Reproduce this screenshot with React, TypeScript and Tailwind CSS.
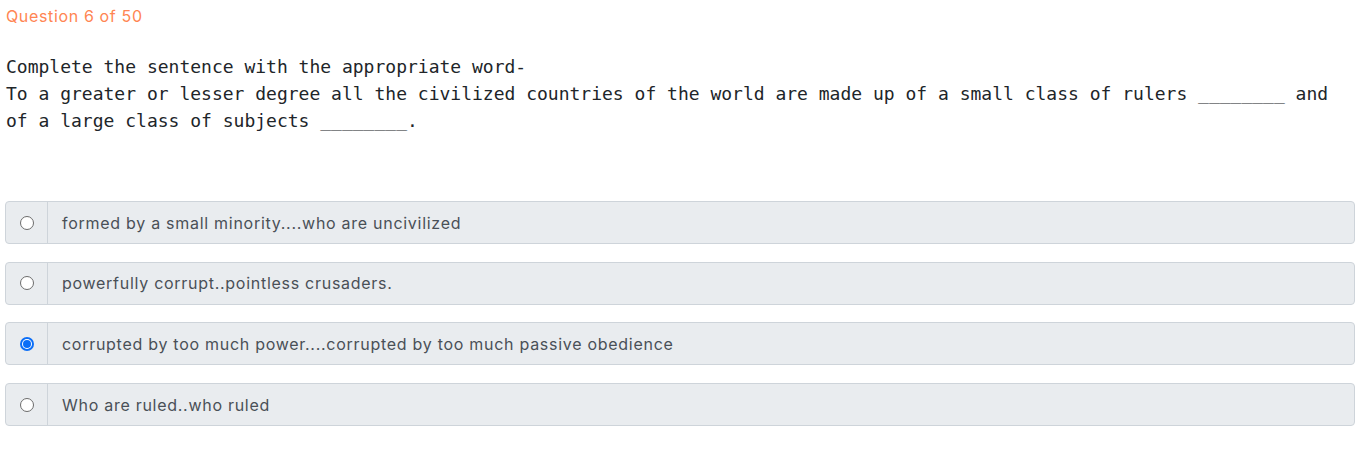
import React from 'react';

const options = [
  { text: 'formed by a small minority....who are uncivilized', checked: false },
  { text: 'powerfully corrupt..pointless crusaders.', checked: false },
  { text: 'corrupted by too much power....corrupted by too much passive obedience', checked: true },
  { text: 'Who are ruled..who ruled', checked: false },
];

const Radio = ({ checked }: { checked: boolean }) =>
  checked ? (
    <span className="flex h-[14px] w-[14px] items-center justify-center rounded-full bg-[#0b6ef7]">
      <span className="flex h-[10px] w-[10px] items-center justify-center rounded-full bg-white">
        <span className="h-[8px] w-[8px] rounded-full bg-[#0b6ef7]" />
      </span>
    </span>
  ) : (
    <span className="h-[14px] w-[14px] rounded-full border border-[#6c6c6c] bg-white" />
  );

const App = () => {
  return (
    <div className="bg-white min-h-screen px-[5px] pt-[4px] font-['Inter',sans-serif]">
      <div className="pl-[1px] text-base leading-6 tracking-[0.04em] text-[#ff8552]">Question 6 of 50</div>

      <div className="mt-[25px] pl-[1px] pr-[20px] font-['DejaVu_Sans_Mono','Liberation_Mono',monospace] text-[18px] leading-[27px] text-[#212529] whitespace-pre-wrap">
        {'Complete the sentence with the appropriate word-\nTo a greater or lesser degree all the civilized countries of the world are made up of a small class of rulers ________ and of a large class of subjects ________.'}
      </div>

      <div className="mt-[67px] mr-[8px] flex flex-col gap-[17.7px]">
        {options.map((opt) => (
          <div
            key={opt.text}
            className="flex h-[43px] items-stretch rounded border border-[#ced4da] bg-[#e9ecef]"
          >
            <div className="flex w-[42px] shrink-0 items-center justify-center border-r border-[#ced4da]">
              <Radio checked={opt.checked} />
            </div>
            <div className="flex items-center pl-[14px] text-base tracking-[0.045em] text-[#495057]">{opt.text}</div>
          </div>
        ))}
      </div>
    </div>
  );
};

export default App;
